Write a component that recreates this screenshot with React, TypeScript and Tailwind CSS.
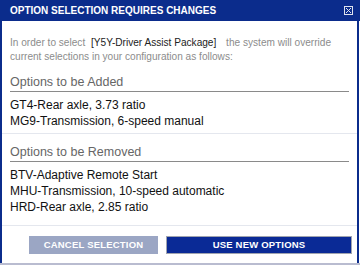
import React from "react"

const added = ["GT4-Rear axle, 3.73 ratio", "MG9-Transmission, 6-speed manual"]

const removed = [
  "BTV-Adaptive Remote Start",
  "MHU-Transmission, 10-speed automatic",
  "HRD-Rear axle, 2.85 ratio",
]

function Section({ title, items }: { title: string; items: string[] }) {
  return (
    <div className="px-[8px]">
      <h3 className="text-[12.5px] leading-[14px] text-[#666] border-b border-[#8a8a8a] pb-[2px]">
        {title}
      </h3>
      <ul className="pt-[5px] text-[12px] leading-[16px] text-[#111]">
        {items.map((item) => (
          <li key={item}>{item}</li>
        ))}
      </ul>
    </div>
  )
}

export default function App() {
  return (
    <div className="w-[360px] h-[271px] bg-white font-['Liberation_Sans',Arial,sans-serif]">
      {/* Title bar */}
      <div className="h-[21px] bg-[#0b2c8c] flex items-center justify-between pl-[10px] pr-[7px]">
        <span className="text-white font-bold text-[10px] leading-none">
          OPTION SELECTION REQUIRES CHANGES
        </span>
        <span className="w-[9px] h-[9px] border border-[#dfe3ee] flex items-center justify-center">
          <svg width="7" height="7" viewBox="0 0 7 7">
            <path d="M1 1L6 6M6 1L1 6" stroke="#dfe3ee" strokeWidth="1" />
          </svg>
        </span>
      </div>

      {/* Body */}
      <div className="mr-[1px] border-l-2 border-r-2 border-[#0b2c8c]">
        <p className="px-[8px] pt-[15px] text-[10.1px] leading-[14px] text-[#8c8c8c]">
          In order to select <span className="ml-[3px] mr-[7px] text-[#222]">[Y5Y-Driver Assist Package]</span> the system will override
          current selections in your configuration as follows:
        </p>
        <div className="pt-[11px] pb-[4px] border-b border-[#e4e7ee]">
          <Section title="Options to be Added" items={added} />
        </div>
        <div className="pt-[11px] pb-[10px] border-b border-[#e4e7ee]">
          <Section title="Options to be Removed" items={removed} />
        </div>
        <div className="flex justify-end gap-[8px] pt-[10px] pb-[9px] pr-[5px]">
          <button className="w-[129px] h-[18px] bg-[#9ba6c4] text-white text-[9.5px] font-bold tracking-[0.2px]">
            CANCEL SELECTION
          </button>
          <button className="w-[186px] h-[18px] bg-[#0a2a96] border border-[#a0a4b0] text-white text-[9.5px] font-bold tracking-[0.2px]">
            USE NEW OPTIONS
          </button>
        </div>
      </div>
      <div className="h-[2px] bg-[#b9bcd0]" />
    </div>
  )
}
